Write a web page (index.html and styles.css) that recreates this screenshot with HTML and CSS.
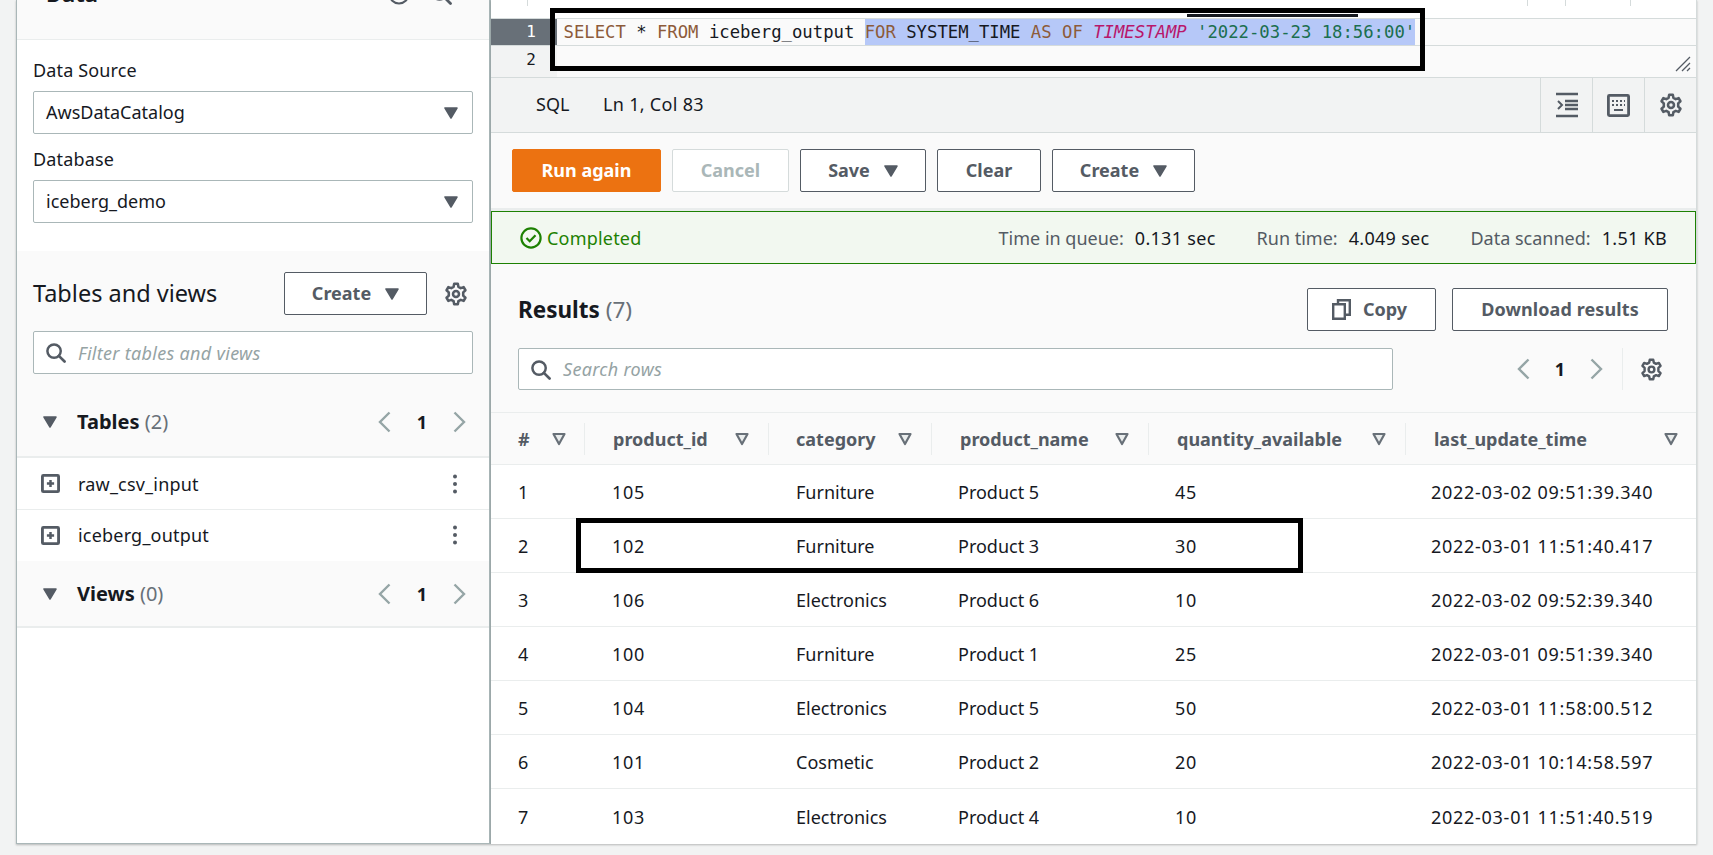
FILE: index.html
```html
<!DOCTYPE html>
<html lang="en">
<head>
  <meta charset="UTF-8">
  <meta name="viewport" content="width=device-width, initial-scale=1.0">
  <title>Athena Query Editor</title>
  <link rel="stylesheet" href="styles.css">
</head>
<body>
  <!-- Shared icons -->
  <svg class="icon-defs" width="0" height="0">
    <symbol id="i-caret" viewBox="0 0 14 12"><path d="M1 1h12L7 11z" fill="#545b64" stroke="#545b64" stroke-width="1.5" stroke-linejoin="round"/></symbol>
    <symbol id="i-sort" viewBox="0 0 14 14"><path d="M1.5 2h11L7 12z" fill="#eaeded" stroke="#687078" stroke-width="2.2" stroke-linejoin="round"/></symbol>
    <symbol id="i-search" viewBox="0 0 22 22"><circle cx="9.5" cy="9.5" r="7" fill="none" stroke="#545b64" stroke-width="2.6"/><path d="M14.5 14.5l6 6" stroke="#545b64" stroke-width="2.8" stroke-linecap="round"/></symbol>
    <symbol id="i-gear" viewBox="0 0 16 16"><g fill="none" stroke="#545b64" stroke-width="1.7" stroke-linejoin="round"><path d="M6.8 1.2h2.4l.4 2 1.6.9 1.9-.7 1.2 2.1-1.5 1.4v2.2l1.5 1.4-1.2 2.1-1.9-.7-1.6.9-.4 2H6.8l-.4-2-1.6-.9-1.9.7-1.2-2.1 1.5-1.4V6.9L1.7 5.5l1.2-2.1 1.9.7 1.6-.9z"/><circle cx="8" cy="8" r="2"/></g></symbol>
    <symbol id="i-left" viewBox="0 0 14 22"><path d="M12.5 1.5L3 11l9.5 9.5" fill="none" stroke="#95a5a6" stroke-width="2.4"/></symbol>
    <symbol id="i-right" viewBox="0 0 14 22"><path d="M1.5 1.5L11 11l-9.5 9.5" fill="none" stroke="#95a5a6" stroke-width="2.4"/></symbol>
    <symbol id="i-plus" viewBox="0 0 20 20"><rect x="1.5" y="1.5" width="17" height="17" rx="1" fill="none" stroke="#545b64" stroke-width="3"/><path d="M10 6.2v7.6M6.2 10h7.6" stroke="#545b64" stroke-width="2.6"/></symbol>
    <symbol id="i-dots" viewBox="0 0 6 20"><circle cx="3" cy="2.5" r="2" fill="#545b64"/><circle cx="3" cy="10" r="2" fill="#545b64"/><circle cx="3" cy="17.5" r="2" fill="#545b64"/></symbol>
  </svg>

  <div class="page">
    <!-- Left panel -->
    <aside class="side">
      <div class="side-head">
        <h2 class="side-title">Data</h2>
        <div class="side-head-icons">
          <svg class="head-circle" width="22" height="22" viewBox="0 0 22 22"><circle cx="11" cy="11" r="9.5" fill="none" stroke="#545b64" stroke-width="2"/></svg>
          <svg class="head-search" width="22" height="22"><use href="#i-search"/></svg>
        </div>
      </div>

      <div class="side-source">
        <div class="field-label">Data Source</div>
        <div class="select">
          <span>AwsDataCatalog</span>
          <svg width="14" height="12"><use href="#i-caret"/></svg>
        </div>
        <div class="field-label field-label-next">Database</div>
        <div class="select">
          <span>iceberg_demo</span>
          <svg width="14" height="12"><use href="#i-caret"/></svg>
        </div>
      </div>

      <div class="side-tables">
        <div class="tables-head">
          <h2 class="tables-title">Tables and views</h2>
          <button class="btn btn-create">Create <svg width="14" height="12"><use href="#i-caret"/></svg></button>
          <svg class="tables-gear" width="24" height="24"><use href="#i-gear"/></svg>
        </div>
        <div class="filter">
          <svg width="21" height="21"><use href="#i-search"/></svg>
          <span class="placeholder">Filter tables and views</span>
        </div>

        <div class="group group-tables">
          <svg class="group-caret" width="14" height="12"><use href="#i-caret"/></svg>
          <span class="group-name">Tables <span class="count">(2)</span></span>
          <div class="pager pager-side">
            <svg width="14" height="22"><use href="#i-left"/></svg>
            <b>1</b>
            <svg width="14" height="22"><use href="#i-right"/></svg>
          </div>
        </div>
        <div class="table-item">
          <svg width="19" height="19"><use href="#i-plus"/></svg>
          <span>raw_csv_input</span>
          <svg class="dots" width="6" height="20"><use href="#i-dots"/></svg>
        </div>
        <div class="table-item table-item-last">
          <svg width="19" height="19"><use href="#i-plus"/></svg>
          <span>iceberg_output</span>
          <svg class="dots" width="6" height="20"><use href="#i-dots"/></svg>
        </div>
        <div class="group group-views">
          <svg class="group-caret" width="14" height="12"><use href="#i-caret"/></svg>
          <span class="group-name">Views <span class="count">(0)</span></span>
          <div class="pager pager-side">
            <svg width="14" height="22"><use href="#i-left"/></svg>
            <b>1</b>
            <svg width="14" height="22"><use href="#i-right"/></svg>
          </div>
        </div>
      </div>
    </aside>

    <!-- Main panel -->
    <main class="main">
      <div class="tabs-edge">
        <i class="tick tick-a"></i>
        <i class="tab-mark"></i>
        <i class="tick tick-b"></i>
        <i class="tick tick-c"></i>
        <i class="tick tick-d"></i>
      </div>

      <div class="editor">
        <div class="code-row code-row-active">
          <div class="gutter">1</div>
          <div class="code"><span class="kw">SELECT</span> * <span class="kw">FROM</span> iceberg_output <span class="sel"><span class="kw">FOR</span> SYSTEM_TIME <span class="kw">AS</span> <span class="kw">OF</span> <em class="fn">TIMESTAMP</em> <span class="str">'2022-03-23 18:56:00'</span></span></div>
        </div>
        <div class="code-row">
          <div class="gutter gutter-idle">2</div>
          <div class="code"></div>
          <svg class="resize" width="16" height="16" viewBox="0 0 16 16"><path d="M1 15L15 1M7 15l8-8M12 15l3-3" stroke="#545b64" stroke-width="1.3"/></svg>
        </div>
        <div class="mark mark-query"></div>
      </div>

      <div class="status-bar">
        <span class="status-lang">SQL</span>
        <span class="status-pos">Ln 1, Col 83</span>
        <div class="status-tools">
          <div class="tool">
            <svg width="22" height="26" viewBox="0 0 22 26"><path d="M0 2h22M9 9h13M9 13h13M9 17h13M0 24h22" stroke="#545b64" stroke-width="2.4"/><path d="M2 9l4 4-4 4" fill="none" stroke="#545b64" stroke-width="2"/></svg>
          </div>
          <div class="tool">
            <svg width="23" height="23" viewBox="0 0 23 23"><rect x="1.4" y="1.4" width="20.2" height="20.2" rx="1" fill="none" stroke="#545b64" stroke-width="2.8"/><path d="M5 7h2M9 7h2M13 7h2M17 7h1M5 11h2M9 11h2M13 11h2M17 11h1M7 16h9" stroke="#545b64" stroke-width="2"/></svg>
          </div>
          <div class="tool">
            <svg width="24" height="24"><use href="#i-gear"/></svg>
          </div>
        </div>
      </div>

      <div class="actions">
        <button class="btn btn-run">Run again</button>
        <button class="btn btn-off">Cancel</button>
        <button class="btn btn-save">Save <svg width="14" height="12"><use href="#i-caret"/></svg></button>
        <button class="btn btn-clear">Clear</button>
        <button class="btn btn-make">Create <svg width="14" height="12"><use href="#i-caret"/></svg></button>
      </div>

      <div class="query-status">
        <svg width="22" height="22" viewBox="0 0 22 22"><circle cx="11" cy="11" r="9.6" fill="none" stroke="#1d8102" stroke-width="2.2"/><path d="M6.5 11l3.2 3.2 5.8-6" fill="none" stroke="#1d8102" stroke-width="2.2"/></svg>
        <span class="done">Completed</span>
        <div class="stats">
          <span class="stat stat-queue">Time in queue:<b>0.131 sec</b></span>
          <span class="stat stat-run">Run time:<b>4.049 sec</b></span>
          <span class="stat">Data scanned:<b>1.51 KB</b></span>
        </div>
      </div>

      <section class="results">
        <div class="results-head">
          <h2 class="results-title">Results <span class="count">(7)</span></h2>
          <button class="btn btn-copy">
            <svg width="19" height="21" viewBox="0 0 19 21"><path d="M6 5V1.2h11.8v14.6H13M1.2 5.2h11.6v14.6H1.2z" fill="none" stroke="#545b64" stroke-width="2.4"/></svg>
            Copy
          </button>
          <button class="btn btn-download">Download results</button>
        </div>
        <div class="results-tools">
          <div class="filter filter-rows">
            <svg width="21" height="21"><use href="#i-search"/></svg>
            <span class="placeholder">Search rows</span>
          </div>
          <div class="pager pager-rows">
            <svg width="14" height="22"><use href="#i-left"/></svg>
            <b>1</b>
            <svg width="14" height="22"><use href="#i-right"/></svg>
          </div>
          <div class="tools-gear">
            <svg width="23" height="23"><use href="#i-gear"/></svg>
          </div>
        </div>

        <div class="grid-row grid-head">
          <div class="th">#<svg width="14" height="14"><use href="#i-sort"/></svg></div>
          <div class="th">product_id<svg width="14" height="14"><use href="#i-sort"/></svg></div>
          <div class="th">category<svg width="14" height="14"><use href="#i-sort"/></svg></div>
          <div class="th">product_name<svg width="14" height="14"><use href="#i-sort"/></svg></div>
          <div class="th">quantity_available<svg width="14" height="14"><use href="#i-sort"/></svg></div>
          <div class="th">last_update_time<svg width="14" height="14"><use href="#i-sort"/></svg></div>
        </div>
        <div class="grid-row"><div>1</div><div>105</div><div>Furniture</div><div>Product 5</div><div>45</div><div>2022-03-02 09:51:39.340</div></div>
        <div class="grid-row grid-row-marked"><div>2</div><div>102</div><div>Furniture</div><div>Product 3</div><div>30</div><div>2022-03-01 11:51:40.417</div><div class="mark mark-row"></div></div>
        <div class="grid-row"><div>3</div><div>106</div><div>Electronics</div><div>Product 6</div><div>10</div><div>2022-03-02 09:52:39.340</div></div>
        <div class="grid-row"><div>4</div><div>100</div><div>Furniture</div><div>Product 1</div><div>25</div><div>2022-03-01 09:51:39.340</div></div>
        <div class="grid-row"><div>5</div><div>104</div><div>Electronics</div><div>Product 5</div><div>50</div><div>2022-03-01 11:58:00.512</div></div>
        <div class="grid-row"><div>6</div><div>101</div><div>Cosmetic</div><div>Product 2</div><div>20</div><div>2022-03-01 10:14:58.597</div></div>
        <div class="grid-row grid-row-last"><div>7</div><div>103</div><div>Electronics</div><div>Product 4</div><div>10</div><div>2022-03-01 11:51:40.519</div></div>
      </section>
    </main>
  </div>
</body>
</html>
```

FILE: styles.css
```css
* {
  box-sizing: border-box;
}

html, body {
  margin: 0;
  padding: 0;
  height: 855px;
  overflow: hidden;
}

body {
  font-family: "Noto Sans", Arial, sans-serif;
  font-size: 18px;
  line-height: 24px;
  color: #16191f;
  background-color: #f2f3f3;
}

h2 {
  margin: 0;
}

svg {
  display: block;
  flex: none;
}

.icon-defs {
  position: absolute;
}

.page {
  display: flex;
  height: 844px;
  padding-left: 16px;
}

/* Left panel */
.side {
  width: 475px;
  background: #ffffff;
  border-left: 1px solid #aab7b8;
  border-right: 2px solid #aab7b8;
  border-bottom: 1px solid #aab7b8;
  box-shadow: 0 1px 2px rgba(0, 0, 0, 0.25);
}

.side-head {
  display: flex;
  justify-content: space-between;
  height: 40px;
  padding-left: 29px;
  background: #fafafa;
  border-bottom: 1px solid #eaeded;
  overflow: hidden;
}

.side-title {
  margin-top: -21px;
  font-size: 22px;
  line-height: 28px;
  font-weight: 700;
}

.side-head-icons {
  display: flex;
  gap: 20px;
  margin-top: -17px;
  padding-right: 37px;
}

.side-source {
  height: 211px;
  padding: 18px 16px 0;
}

.field-label {
  margin-bottom: 9px;
  letter-spacing: 0.15px;
}

.field-label-next {
  margin-top: 13px;
}

.select, .filter {
  display: flex;
  align-items: center;
  height: 43px;
  background: #ffffff;
  border: 1px solid #aab7b8;
  border-radius: 2px;
}

.select {
  justify-content: space-between;
  padding: 0 14px 0 12px;
}

.select span {
  margin-top: -2px;
}

.filter {
  gap: 12px;
  margin: 16px 16px 0;
  padding-left: 11px;
}

.placeholder {
  color: #95a3a4;
  font-style: italic;
  letter-spacing: 0.3px;
}

.side-tables {
  background: #fafafa;
}

.tables-head {
  display: flex;
  align-items: center;
  height: 64px;
  padding: 21px 0 0 16px;
}

.tables-title {
  width: 251px;
  font-size: 23.5px;
  font-weight: 400;
  line-height: 43px;
}

.btn {
  display: flex;
  align-items: center;
  justify-content: center;
  height: 43px;
  padding: 0 0 2px;
  font-family: inherit;
  font-size: 18px;
  font-weight: 700;
  color: #545b64;
  background: #ffffff;
  border: 1px solid #545b64;
  border-radius: 2px;
}

.btn svg {
  margin-bottom: -2px;
}

.btn-create {
  gap: 14px;
  width: 143px;
}

.tables-gear {
  margin-left: 17px;
}

.group {
  display: flex;
  align-items: center;
  padding-left: 26px;
  border-bottom: 2px solid #eaeded;
}

.group-tables {
  height: 70px;
  margin-top: 14px;
}

.group-views {
  height: 67px;
}

.group-name {
  margin-left: 20px;
  font-size: 20px;
  font-weight: 700;
}

.count {
  color: #687078;
  font-weight: 400;
}

.pager {
  display: flex;
  align-items: center;
}

.pager b {
  text-align: center;
  font-weight: 700;
}

.pager-side {
  margin-left: auto;
  padding-right: 22px;
}

.pager-side b {
  width: 62px;
}

.table-item {
  display: flex;
  align-items: center;
  gap: 18px;
  height: 52px;
  padding: 0 31px 0 24px;
  background: #ffffff;
  border-bottom: 1px solid #eaeded;
}

.table-item span {
  letter-spacing: 0.2px;
}

.table-item-last {
  height: 51px;
  padding-bottom: 1px;
  border-bottom: none;
}

.dots {
  margin-left: auto;
}

/* Main panel */
.main {
  width: 1206px;
  background: #ffffff;
  border-right: 1px solid #d5dbdb;
  box-shadow: 0 1px 2px rgba(0, 0, 0, 0.25);
}

.tabs-edge {
  position: relative;
  height: 19px;
  border-bottom: 1px solid #d5dbdb;
}

.tick {
  position: absolute;
  top: 0;
  width: 1px;
  height: 6px;
  background: #d5dbdb;
}

.tick-a { left: 36px; }
.tick-b { left: 1036px; }
.tick-c { left: 1074px; }
.tick-d { left: 1139px; }

.tab-mark {
  position: absolute;
  left: 696px;
  top: 14px;
  width: 171px;
  height: 3px;
  background: #16191f;
}

.editor {
  position: relative;
  border-bottom: 1px solid #d5dbdb;
}

.code-row {
  position: relative;
  display: flex;
  height: 31px;
  background: #fafafa;
}

.code-row-active {
  height: 27px;
  border-bottom: 1px solid #d5dbdb;
}

.gutter {
  width: 66px;
  padding-right: 21px;
  text-align: right;
  font-family: "DejaVu Sans Mono", monospace;
  font-size: 16px;
  line-height: 26px;
  color: #ffffff;
  background: #687078;
}

.gutter-idle {
  color: #16191f;
  background: #f2f3f3;
  line-height: 27px;
}

.code {
  padding-left: 6.5px;
  font-family: "DejaVu Sans Mono", monospace;
  font-size: 17.25px;
  line-height: 26px;
  white-space: pre;
}

.kw { color: #8d5b3a; }
.fn { color: #b8176b; }
.str { color: #1b6f4f; }

.sel {
  display: inline-block;
  background: #b6c8f8;
}

.resize {
  position: absolute;
  right: 5px;
  bottom: 5px;
}

/* Black rectangles drawn over the screenshot */
.mark {
  position: absolute;
  border: 5px solid #000000;
  pointer-events: none;
}

.mark-query {
  left: 59px;
  top: -11px;
  width: 875px;
  height: 63px;
}

.mark-row {
  left: 85px;
  top: -1px;
  width: 727px;
  height: 55px;
}

.status-bar {
  display: flex;
  align-items: center;
  height: 55px;
  padding-left: 45px;
  background: #f2f3f3;
  border-bottom: 1px solid #d5dbdb;
}

.status-bar > span {
  margin-top: -2px;
}

.status-lang {
  width: 67px;
}

.status-pos {
  letter-spacing: 0.3px;
}

.status-tools {
  display: flex;
  height: 100%;
  margin-left: auto;
}

.tool {
  display: flex;
  align-items: center;
  justify-content: center;
  width: 52px;
  border-left: 1px solid #d5dbdb;
}

.actions {
  display: flex;
  gap: 11px;
  height: 78px;
  padding: 16px 0 0 21px;
  background: #fafafa;
  border-bottom: 3px solid #eaeded;
}

.btn-run {
  width: 149px;
  color: #ffffff;
  background: #ec7211;
  border-color: #ec7211;
}

.btn-off {
  width: 117px;
  color: #aab7b8;
  border-color: #d5dbdb;
}

.btn-save {
  gap: 14px;
  width: 126px;
}

.btn-clear {
  width: 104px;
}

.btn-make {
  gap: 14px;
  width: 143px;
}

.query-status {
  display: flex;
  align-items: center;
  height: 53px;
  padding-left: 28px;
  background: #f2f8f0;
  border: 1px solid #1d8102;
}

.done {
  margin-left: 5px;
  color: #1d8102;
  letter-spacing: 0.2px;
}

.stats {
  display: flex;
  margin-left: auto;
  padding-right: 28px;
}

.stat {
  color: #545b64;
}

.stat b {
  margin-left: 11px;
  font-weight: 400;
  color: #16191f;
  letter-spacing: 0.3px;
}

.stat-queue,
.stat-run {
  margin-right: 41px;
}

/* Results */
.results {
  background: #fafafa;
}

.results-head {
  display: flex;
  align-items: center;
  padding: 24px 28px 0 27px;
}

.results-title {
  margin-right: auto;
  font-size: 22.5px;
  font-weight: 700;
}

.btn-copy {
  gap: 12px;
  width: 129px;
  margin-right: 16px;
  padding-right: 4px;
}

.btn-download {
  width: 216px;
  letter-spacing: 0.1px;
}

.results-tools {
  display: flex;
  align-items: center;
  height: 42px;
  margin-top: 17px;
  padding-left: 27px;
}

.filter-rows {
  width: 875px;
  height: 42px;
  margin: 0;
}

.filter-rows .placeholder {
  margin-top: -1px;
}

.pager-rows {
  margin-left: 123px;
}

.pager-rows b {
  width: 60px;
}

.tools-gear {
  display: flex;
  align-items: center;
  height: 100%;
  margin-left: 18px;
  padding-left: 17px;
  border-left: 1px solid #eaeded;
}

.grid-row {
  position: relative;
  display: grid;
  grid-template-columns: 94px 184px 163px 217px 257px 290px;
  align-items: center;
  height: 54px;
  background: #ffffff;
  border-bottom: 1px solid #eaeded;
}

.grid-row > div {
  padding-left: 27px;
}

/* numeric columns render wider in the original face */
.grid-row > div:nth-child(1),
.grid-row > div:nth-child(2),
.grid-row > div:nth-child(5),
.grid-row > div:nth-child(6) {
  letter-spacing: 0.72px;
}

.grid-row > div:nth-child(n+4) {
  padding-left: 26px;
}

.grid-row > div:nth-child(6) {
  padding-left: 25px;
}

.grid-row > .mark {
  padding: 0;
}

.grid-row-last {
  height: 55px;
  border-bottom: none;
}

.grid-head {
  height: 53px;
  margin-top: 22px;
  background: #fafafa;
  border-top: 1px solid #eaeded;
}

.grid-head > div.th {
  display: flex;
  align-items: center;
  justify-content: space-between;
  height: 32px;
  padding-left: 27px;
  padding-right: 19px;
  font-weight: 700;
  letter-spacing: 0;
  color: #545b64;
  border-right: 1px solid #eaeded;
}

.grid-head > div.th:first-child {
  padding-right: 18px;
}

.grid-head > div.th:nth-child(2) {
  padding-left: 28px;
}

.grid-head > div.th:nth-child(4),
.grid-head > div.th:nth-child(5) {
  padding-left: 28px;
}

.grid-head > div.th:last-child {
  padding-left: 28px;
  padding-right: 18px;
  border-right: none;
}
```
